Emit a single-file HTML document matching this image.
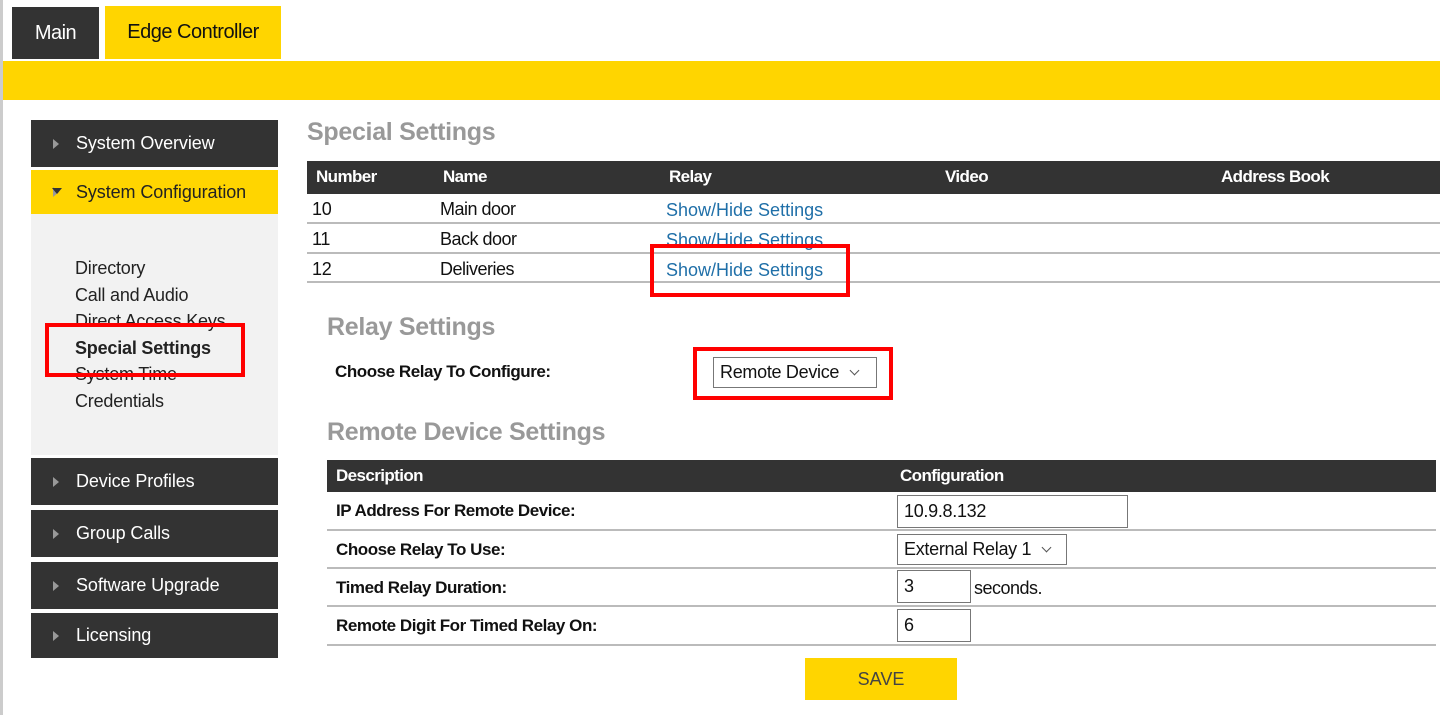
<!DOCTYPE html>
<html><head><style>
*{margin:0;padding:0;box-sizing:border-box}
body{width:1440px;height:715px;background:#fff;position:relative;overflow:hidden;font-family:"Liberation Sans Narrow","Liberation Sans",sans-serif;font-size:19px;color:#111}
.a{position:absolute}
.dk{background:#333;color:#fff}
.yl{background:#ffd500}
.nav{position:absolute;left:31px;width:247px;color:#fff;background:#333;font-size:18px;letter-spacing:-0.1px;padding-left:45px;display:flex;align-items:center}
.nav:before{content:"";position:absolute;left:22px;top:50%;margin-top:-5px;border-left:6px solid #999;border-top:5px solid transparent;border-bottom:5px solid transparent}
.h{position:absolute;font-weight:bold;color:#999;font-size:25px;letter-spacing:-0.3px}
.th{position:absolute;font-weight:bold;color:#fff;font-size:17px;letter-spacing:-0.6px}
.line{position:absolute;height:2px;background:#bbb}
.lk{color:#1f6fa8}
.b{font-weight:bold;font-size:17px;letter-spacing:-0.45px}
.inp{position:absolute;border:1px solid #777;background:#fff;padding-left:6px;display:flex;align-items:center;font-size:18px;letter-spacing:-0.3px}
.chev{display:inline-block;width:7px;height:7px;border-right:1px solid #555;border-bottom:1px solid #555;transform:rotate(45deg);margin-left:12px;margin-top:-5px}
.red{position:absolute;border:4px solid #f00}
</style></head><body>
<div class="a" style="left:0;top:0;width:3px;height:715px;background:#ccc"></div>
<div class="a dk" style="left:12px;top:7px;width:87px;height:52px;display:flex;align-items:center;justify-content:center;font-size:20px;letter-spacing:-0.5px">Main</div>
<div class="a yl" style="left:105px;top:6px;width:176px;height:53px;display:flex;align-items:center;justify-content:center;font-size:20px;letter-spacing:-0.5px">Edge Controller</div>
<div class="a yl" style="left:3px;top:61px;width:1437px;height:39px"></div>

<div class="nav" style="top:120px;height:47px">System Overview</div>
<div class="nav yl" style="top:170px;height:44px;color:#222;background:#ffd500">System Configuration</div>
<div class="a" style="left:52px;top:188px;border-top:6px solid #333;border-left:5px solid transparent;border-right:5px solid transparent"></div>
<div class="a" style="left:31px;top:214px;width:247px;height:241px;background:#f2f2f2"></div>
<div class="a" style="left:75px;top:255px;line-height:26.6px;font-size:18px;letter-spacing:-0.2px;color:#222">Directory<br>Call and Audio<br>Direct Access Keys<br><b>Special Settings</b><br>System Time<br>Credentials</div>
<div class="nav" style="top:458px;height:47px">Device Profiles</div>
<div class="nav" style="top:510px;height:47px">Group Calls</div>
<div class="nav" style="top:562px;height:47px">Software Upgrade</div>
<div class="nav" style="top:613px;height:45px">Licensing</div>

<div class="h" style="left:307px;top:118px">Special Settings</div>
<div class="a dk" style="left:307px;top:161px;width:1133px;height:33px"></div>
<div class="th" style="left:316px;top:167px">Number</div>
<div class="th" style="left:443px;top:167px">Name</div>
<div class="th" style="left:669px;top:167px">Relay</div>
<div class="th" style="left:945px;top:167px">Video</div>
<div class="th" style="left:1221px;top:167px">Address Book</div>
<div class="a" style="left:312px;top:194px;line-height:30px;font-size:18px;letter-spacing:-0.3px">10<br>11<br>12</div>
<div class="a" style="left:440px;top:194px;line-height:30px;font-size:18px;letter-spacing:-0.5px">Main door<br>Back door<br>Deliveries</div>
<div class="a lk" style="left:666px;top:195px;line-height:30px;font-size:18px;letter-spacing:0px">Show/Hide Settings<br>Show/Hide Settings<br>Show/Hide Settings</div>
<div class="line" style="left:307px;top:222px;width:1133px"></div>
<div class="line" style="left:307px;top:252px;width:1133px"></div>
<div class="line" style="left:307px;top:281px;width:1133px"></div>

<div class="h" style="left:327px;top:313px">Relay Settings</div>
<div class="a b" style="left:335px;top:362px">Choose Relay To Configure:</div>
<div class="inp" style="left:713px;top:357px;width:164px;height:31px">Remote Device<span class="chev"></span></div>

<div class="h" style="left:327px;top:418px">Remote Device Settings</div>
<div class="a dk" style="left:327px;top:460px;width:1109px;height:32px"></div>
<div class="th" style="left:336px;top:466px">Description</div>
<div class="th" style="left:900px;top:466px">Configuration</div>
<div class="a b" style="left:336px;top:501px">IP Address For Remote Device:</div>
<div class="a b" style="left:336px;top:540px">Choose Relay To Use:</div>
<div class="a b" style="left:336px;top:578px">Timed Relay Duration:</div>
<div class="a b" style="left:336px;top:616px">Remote Digit For Timed Relay On:</div>
<div class="line" style="left:327px;top:529px;width:1109px"></div>
<div class="line" style="left:327px;top:567px;width:1109px"></div>
<div class="line" style="left:327px;top:605px;width:1109px"></div>
<div class="line" style="left:327px;top:644px;width:1109px"></div>
<div class="inp" style="left:897px;top:495px;width:231px;height:33px">10.9.8.132</div>
<div class="inp" style="left:897px;top:534px;width:170px;height:31px">External Relay 1<span class="chev"></span></div>
<div class="inp" style="left:897px;top:570px;width:74px;height:33px">3</div>
<div class="a" style="left:974px;top:578px;font-size:18px;letter-spacing:-0.5px">seconds.</div>
<div class="inp" style="left:897px;top:609px;width:74px;height:33px">6</div>
<div class="a yl" style="left:805px;top:658px;width:152px;height:42px;display:flex;align-items:center;justify-content:center;color:#444;font-size:18px">SAVE</div>

<div class="red" style="left:45px;top:323px;width:200px;height:54px"></div>
<div class="red" style="left:650px;top:244px;width:200px;height:53px"></div>
<div class="red" style="left:693px;top:347px;width:200px;height:53px"></div>
</body></html>
